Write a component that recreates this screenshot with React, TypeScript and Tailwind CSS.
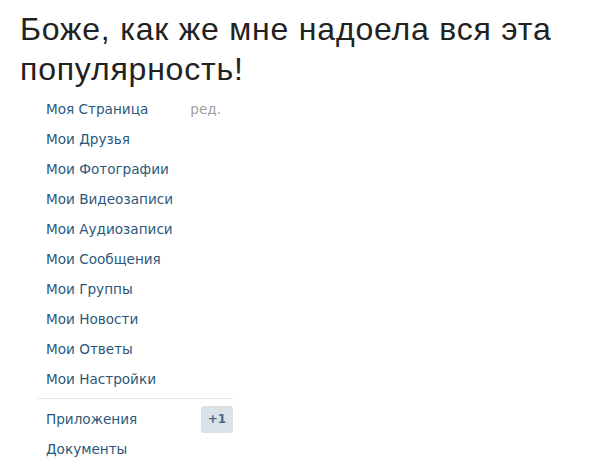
export default function App() {
  const items = [
    "Мои Друзья",
    "Мои Фотографии",
    "Мои Видеозаписи",
    "Мои Аудиозаписи",
    "Мои Сообщения",
    "Мои Группы",
    "Мои Новости",
    "Мои Ответы",
    "Мои Настройки",
  ];

  return (
    <div className="h-[468px] w-[604px] bg-white">
      <h1 className="px-[20px] pt-[9px] font-['Liberation_Sans',Arial,sans-serif] text-[32px] leading-[40px] tracking-[0.8px] text-[#222]">
        Боже, как же мне надоела вся эта популярность!
      </h1>

      <div className="ml-[37px] mt-[5px] w-[196px] font-['DejaVu_Sans',Tahoma,sans-serif] text-[13.6px]">
        <div className="flex h-[30px] items-center justify-between pl-[9px] pr-[12px]">
          <span className="text-[#2b587a]">Моя Страница</span>
          <span className="text-[#a0a0a0]">ред.</span>
        </div>
        {items.map((item) => (
          <div
            key={item}
            className="flex h-[30px] items-center pl-[9px] text-[#2b587a]"
          >
            {item}
          </div>
        ))}

        <div className="mb-[5px] mt-[4px] h-px bg-[#e3e7eb]" />

        <div className="flex h-[30px] items-center justify-between pl-[9px]">
          <span className="text-[#2b587a]">Приложения</span>
          <span className="flex h-[27px] w-[32px] items-center justify-center rounded-[3px] bg-[#dae2e8] text-[12px] font-bold text-[#45688e]">
            +1
          </span>
        </div>
        <div className="flex h-[30px] items-center pl-[9px] text-[#2b587a]">
          Документы
        </div>
      </div>
    </div>
  );
}
